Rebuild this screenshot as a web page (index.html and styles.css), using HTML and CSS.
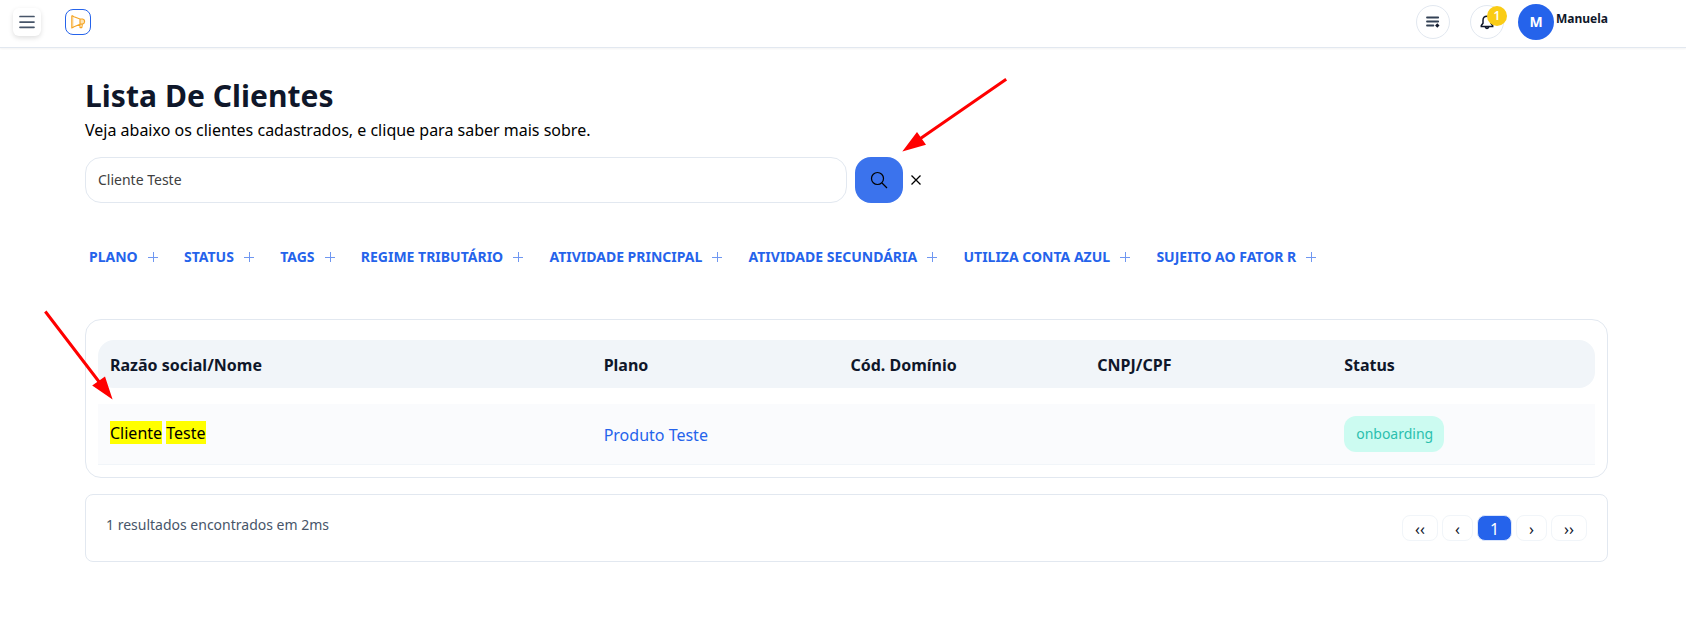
FILE: index.html
```html
<!DOCTYPE html>
<html lang="pt-BR">
<head>
<meta charset="utf-8">
<title>Lista De Clientes</title>
<link rel="stylesheet" href="styles.css">
</head>
<body>
<header class="topbar">
  <button class="menu-btn" aria-label="Menu"><svg width="28" height="28" viewBox="0 0 28 28"><path d="M7 8.5H21M7 14.1H21M7 19.3H21"/></svg></button>
  <button class="logo-btn" aria-label="Novidades"><svg width="24" height="24" viewBox="0 0 24 24"><path class="tint" d="M5.8 5.8H7.6V17.8H5.8ZM13.8 9H17Q18.6 9.6 18.6 11.8Q18.4 13.6 16.8 14H13.8Z"/><path d="M5.8 5.6V18L8 16.8L14 14.2M5.8 5.6L8 6.8L14 9M14 9H16.6Q18.7 9.4 18.6 11.8Q18.4 13.8 16.4 14.1H14M14 9V17.6H15.8L16.4 14.1"/></svg></button>
  <div class="topbar-right">
    <button class="round list-btn" aria-label="Lista"><svg width="14" height="12" viewBox="0 0 14 12"><path d="M1 1.5H12.2M1 5.5H12.2M1 9.5H7.4"/><path class="spark" d="M11.3 7.2L13.5 9.5L11.3 11.8L9.1 9.5Z"/></svg></button>
    <button class="round bell-btn" aria-label="Notificações"><svg width="14" height="15" viewBox="0 0 14 15"><path d="M7 1.2C4.6 1.2 3 3 3 5.2V8.2L1.3 10.6V11.4H12.7V10.6L11 8.2V5.2C11 3 9.4 1.2 7 1.2ZM5 11.7Q7 15.4 9 11.7"/></svg><span class="badge">1</span></button>
    <div class="avatar">M</div>
    <span class="user">Manuela</span>
  </div>
</header>
<main class="page">
  <h1 class="title">Lista De Clientes</h1>
  <p class="subtitle">Veja abaixo os clientes cadastrados, e clique para saber mais sobre.</p>
  <div class="search">
    <div class="search-input">Cliente Teste</div>
    <button class="search-btn" aria-label="Buscar"><svg width="18" height="18" viewBox="0 0 18 18"><circle cx="7.5" cy="7.5" r="6"/><path d="M12 12L17 17"/></svg></button>
    <button class="clear-btn" aria-label="Limpar"><svg width="10" height="10" viewBox="0 0 10 10"><path d="M.5 .5L9.5 9.5M9.5 .5L.5 9.5"/></svg></button>
  </div>
  <nav class="filters">
    <a class="filter">PLANO<i class="plus"></i></a>
    <a class="filter">STATUS<i class="plus"></i></a>
    <a class="filter">TAGS<i class="plus"></i></a>
    <a class="filter">REGIME TRIBUTÁRIO<i class="plus"></i></a>
    <a class="filter">ATIVIDADE PRINCIPAL<i class="plus"></i></a>
    <a class="filter">ATIVIDADE SECUNDÁRIA<i class="plus"></i></a>
    <a class="filter">UTILIZA CONTA AZUL<i class="plus"></i></a>
    <a class="filter">SUJEITO AO FATOR R<i class="plus"></i></a>
  </nav>
  <section class="table">
    <div class="row head"><span class="wide">Razão social/Nome</span><span>Plano</span><span>Cód. Domínio</span><span>CNPJ/CPF</span><span>Status</span></div>
    <div class="row item"><span class="wide name"><mark>Cliente</mark> <mark>Teste</mark></span><a class="plan">Produto Teste</a><span></span><span></span><span class="status">onboarding</span></div>
  </section>
  <section class="pager">
    <span class="results">1 resultados encontrados em 2ms</span>
    <div class="pages">
      <button class="pg dbl">‹‹</button><button class="pg">‹</button><button class="pg active">1</button><button class="pg">›</button><button class="pg dbl">››</button>
    </div>
  </section>
</main>
<svg class="arrows" width="1686" height="629" viewBox="0 0 1686 629">
  <path class="shaft" d="M1006.2 79.2L919 139.5M45.3 311.5L100 383"/>
  <path class="tip" d="M902.3 151.6L917 132L926 144.8ZM112.6 399.6L105 376.5L92.2 385.6Z"/>
</svg>
</body>
</html>
```
FILE: styles.css
```css
* { box-sizing: border-box; }
body { margin: 0; background: #fff; color: #000; font: 16px/24px "Noto Sans", sans-serif; overflow: hidden; }
button { border: 0; background: none; padding: 0; margin: 0; font: inherit; display: flex; align-items: center; justify-content: center; flex: none; }
svg { fill: none; display: block; flex: none; }
h1, p { margin: 0; }

.topbar { height: 48px; border-bottom: 1px solid #e2e8f0; box-shadow: 0 1px 2px rgba(0,0,0,.05); display: flex; align-items: flex-start; padding-left: 13px; padding-right: 79px; }
.menu-btn { width: 28px; height: 28px; margin-top: 8px; border-radius: 6px; box-shadow: 0 2px 5px rgba(0,0,0,.13); }
.menu-btn svg { stroke: #475569; stroke-width: 1.7; stroke-linecap: round; }
.logo-btn { width: 26px; height: 26px; margin: 9px 0 0 24px; border: 1px solid #2563eb; border-radius: 8px; }
.logo-btn svg { stroke: #f5a524; stroke-width: 1.1; stroke-linejoin: round; }
.logo-btn .tint { fill: #fde3b5; stroke: none; }
.topbar-right { margin-left: auto; display: flex; align-items: flex-start; }
.round { width: 34px; height: 34px; margin-top: 5px; border: 1px solid #e2e8f0; border-radius: 50%; position: relative; }
.list-btn { margin-right: 20px; }
.list-btn svg { stroke: #334155; stroke-width: 1.8; stroke-linecap: round; }
.list-btn .spark { fill: #0f172a; stroke: none; }
.bell-btn { margin-right: 14px; }
.bell-btn svg { stroke: #0f172a; stroke-width: 1.5; }
.badge { position: absolute; left: 16px; top: 0; width: 20px; height: 20px; border-radius: 50%; background: #facc15; color: #fff; font-size: 12px; line-height: 20px; font-weight: 600; }
.avatar { width: 36px; height: 36px; margin-top: 4px; border-radius: 50%; background: #2563eb; color: #fff; font-size: 14px; line-height: 36px; font-weight: 700; text-align: center; }
.user { width: 51px; margin: 10px 0 0 2px; font-size: 12px; line-height: 17px; font-weight: 700; color: #0f172a; white-space: nowrap; }

.page { padding: 30px 78px 0 85px; }
.title { font-size: 30px; line-height: 36px; font-weight: 700; color: #0f172a; letter-spacing: .05px; }
.subtitle { margin-top: 4px; }
.search { display: flex; align-items: center; margin-top: 15px; }
.search-input { width: 762px; height: 46px; border: 1px solid #e2e8f0; border-radius: 16px; padding-left: 12px; font-size: 14px; line-height: 44px; color: #404040; }
.search-btn { width: 48px; height: 46px; margin-left: 8px; border-radius: 16px; background: #3b73ed; }
.search-btn svg { stroke: #000; stroke-width: 1.2; }
.clear-btn { margin-left: 8px; }
.clear-btn svg { stroke: #000; stroke-width: 1.3; }

.filters { display: flex; gap: 26.2px; margin-top: 44px; padding-left: 4px; }
.filter { display: flex; align-items: center; gap: 10.1px; height: 20px; font-size: 14px; line-height: 20px; font-weight: 700; color: #2563eb; white-space: nowrap; }
.plus { width: 10px; height: 10px; background: linear-gradient(#6f97f1, #6f97f1) 0 5px / 10px 1px no-repeat, linear-gradient(#6f97f1, #6f97f1) 5px 0 / 1px 10px no-repeat; }

.table { margin-top: 52px; height: 159px; border: 1px solid #e2e8f0; border-radius: 16px; padding: 20px 12px 0; }
.row { display: grid; grid-template-columns: repeat(6, 1fr); column-gap: 8px; padding: 12px; }
.wide { grid-column: span 2; }
.head { height: 48px; padding-top: 13px; background: #f1f5f9; border-radius: 16px; font-weight: 700; color: #0f172a; }
.item { height: 61px; margin-top: 16px; background: #fafbfd; border-bottom: 1px solid #f1f5f9; }
.name { padding-top: 5px; }
mark { background: #ff0; color: #000; padding-top: 1px; }
.plan { padding-top: 7px; color: #2563eb; }
.status { justify-self: start; width: 100px; height: 36px; padding: 0 12px; border-radius: 12px; background: #ccfbf1; color: #2bbfae; font-size: 14px; line-height: 36px; }

.pager { margin-top: 16px; height: 68px; border: 1px solid #e2e8f0; border-radius: 8px; padding: 20px; display: flex; justify-content: space-between; }
.results { font-size: 14px; line-height: 20px; color: #475569; }
.pages { display: flex; gap: 4px; }
.pg { width: 31px; height: 26px; padding-top: 1px; border: 1px solid #f1f5f9; border-radius: 8px; color: #0f172a; }
.dbl { width: 36px; }
.active { width: 35px; padding-top: 2px; background: #2563eb; border-color: #dbe6fc; color: #fff; }

.arrows { position: absolute; left: 0; top: 0; pointer-events: none; }
.shaft { stroke: #f00; stroke-width: 3; }
.tip { fill: #f00; }
```
